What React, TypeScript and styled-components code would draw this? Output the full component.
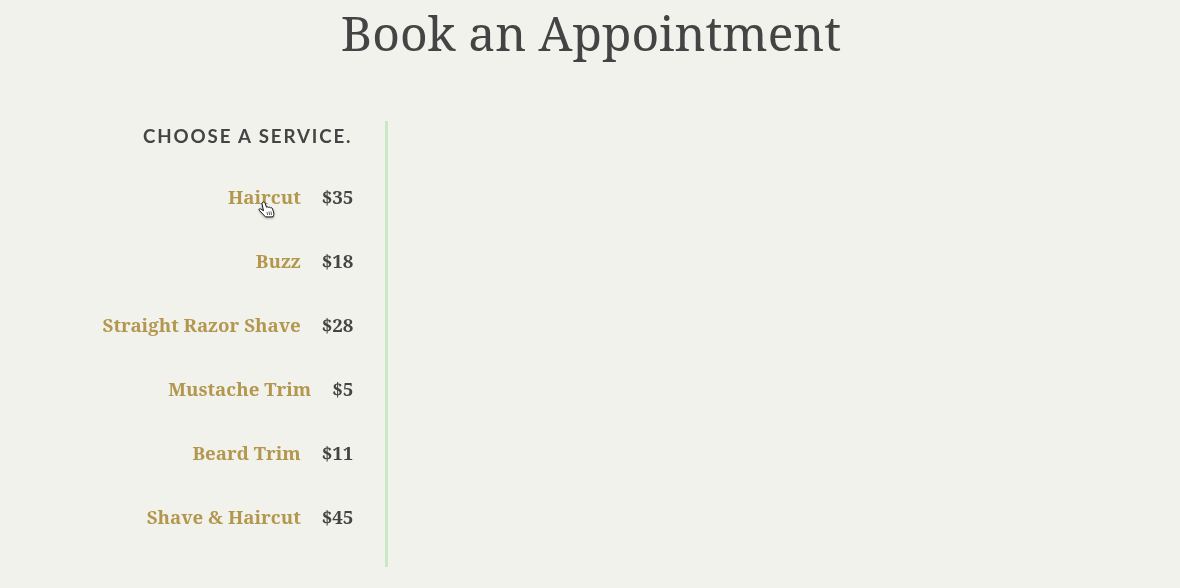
import styled, { createGlobalStyle } from 'styled-components'

const GlobalStyle = createGlobalStyle`
  html, body {
    margin: 0;
    padding: 0;
    background-color: #f1f2ec;
  }
  body {
    height: 588px;
    overflow: hidden;
  }
`

const Page = styled.div`
  width: 1180px;
  height: 588px;
  box-sizing: border-box;
  padding-top: 3px;
  color: #444;
  font-family: "Noto Serif", "Liberation Serif", serif;
  will-change: transform;
`

const Title = styled.h1`
  margin: 0;
  height: 118px;
  padding-left: 2px;
  text-align: center;
  font-size: 48px;
  line-height: 60px;
  font-weight: 400;
`

const Panel = styled.div`
  width: 388px;
  height: 446px;
  box-sizing: border-box;
  padding-right: 31.6px;
  border-right: 3px solid #c8e9c3;
`

const Heading = styled.h2`
  margin: 0 1px 34px 0;
  height: 30px;
  text-align: right;
  font-family: Lato, sans-serif;
  font-size: 18.72px;
  line-height: 30px;
  font-weight: 700;
  letter-spacing: 0.1em;
`

const ServiceList = styled.ul`
  margin: 0;
  padding: 0;
  list-style: none;
`

const Service = styled.li`
  display: flex;
  justify-content: flex-end;
  gap: 21px;
  height: 64px;
  font-size: 18.72px;
  line-height: 24px;
  font-weight: 700;
`

const ServiceName = styled.span`
  color: #b4974f;
  position: relative;
`

const Price = styled.span`
  color: #444;
`

const Cursor = styled.svg`
  position: absolute;
  left: 30px;
  top: 16px;
  filter: drop-shadow(0 1px 1px rgba(0, 0, 0, 0.3));
`

const services = [
  { name: 'Haircut', price: '$35', hover: true },
  { name: 'Buzz', price: '$18' },
  { name: 'Straight Razor Shave', price: '$28' },
  { name: 'Mustache Trim', price: '$5' },
  { name: 'Beard Trim', price: '$11' },
  { name: 'Shave & Haircut', price: '$45' },
]

const App = () => {
  return (
    <Page>
      <GlobalStyle />
      <Title>Book an Appointment</Title>
      <Panel>
        <Heading>CHOOSE A SERVICE.</Heading>
        <ServiceList>
          {services.map(service => (
            <Service key={service.name}>
              <ServiceName>
                {service.name}
                {service.hover && (
                  <Cursor width="18" height="19" viewBox="0 0 18 19">
                    <path
                      d="M4.800 1.200c1-.5 2 0 2.300 1L8.500 6.200c.7-.5 1.500-.4 2 .2.700-.4 1.500-.2 2 .4.800-.3 1.500 0 1.800.6l1.300 3.500c.5 1.700.2 3.500-.6 5H7.500L1.200 9.200c-.6-.8.300-1.900 1.300-1.400l3 2L4 2.900c-.2-.7.200-1.400.8-1.700z"
                      fill="#fff"
                      stroke="#111"
                      strokeWidth="1"
                      strokeLinejoin="round"
                    />
                    <path d="M9 11l.6 3M11 10.500l.6 3.500M13 10.500l.5 3.500" stroke="#333" strokeWidth="0.8" fill="none" />
                  </Cursor>
                )}
              </ServiceName>
              <Price>{service.price}</Price>
            </Service>
          ))}
        </ServiceList>
      </Panel>
    </Page>
  )
}

export default App
